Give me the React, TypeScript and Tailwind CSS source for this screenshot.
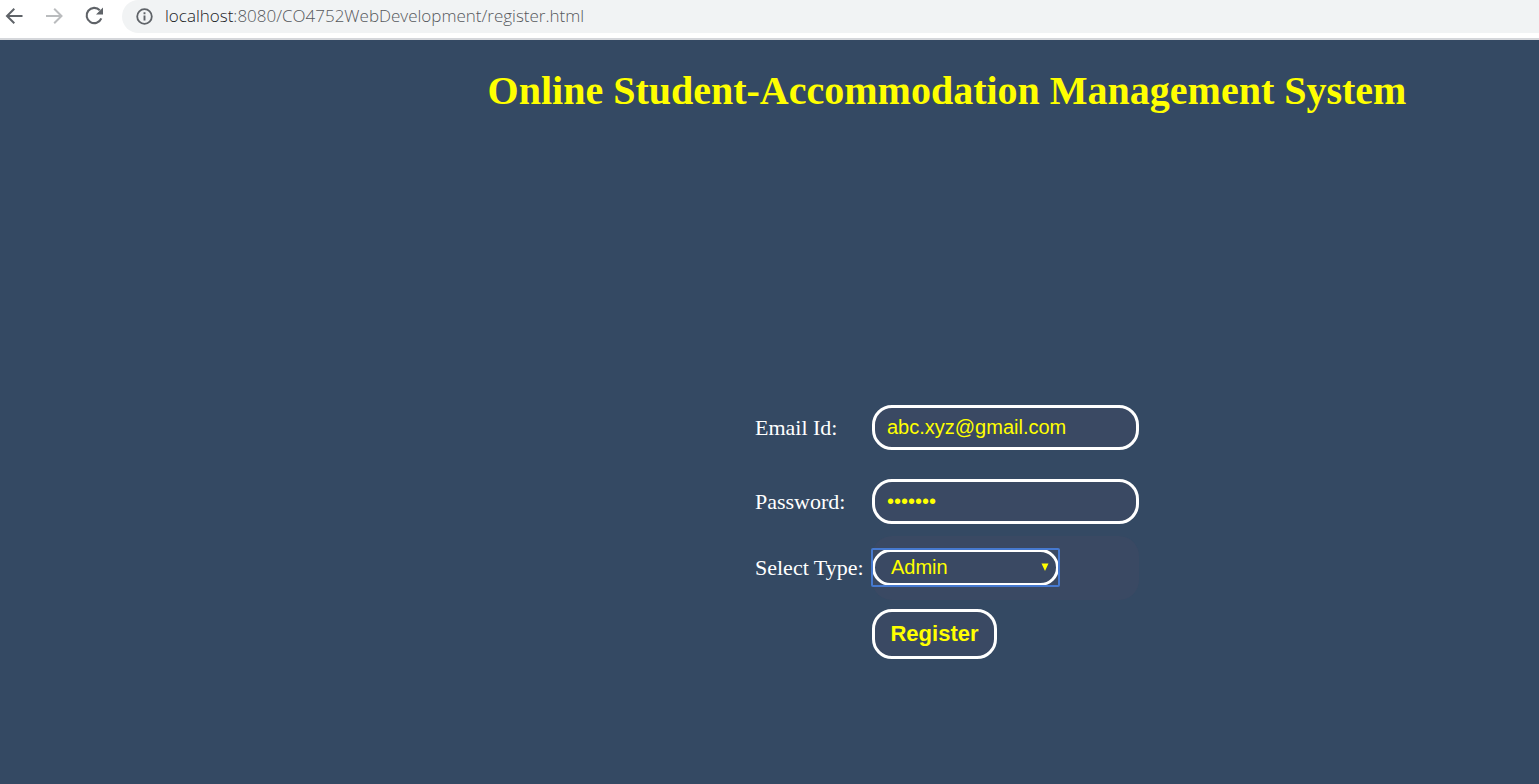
import { useState } from "react";

function Toolbar() {
  return (
    <header className="flex h-10 items-start border-b-2 border-[#d5d7db] bg-white text-[#5f6368]">
      <nav aria-label="Browser" className="flex h-8 shrink-0 items-center gap-4 px-0.5 pr-4">
        <button type="button" aria-label="Back" className="flex size-6 items-center justify-center">
          <svg className="size-5 shrink-0" viewBox="0 0 20 20" fill="none" stroke="currentColor" strokeWidth="2">
            <path d="M18.500 10H3.500M10.300 2.800 3 10l7.300 7.200" />
          </svg>
        </button>
        <button type="button" aria-label="Forward" className="flex size-6 items-center justify-center text-[#babcbe]">
          <svg className="size-5 shrink-0" viewBox="0 0 20 20" fill="none" stroke="currentColor" strokeWidth="2">
            <path d="M2 10h15M10.200 2.800 17.500 10l-7.300 7.200" />
          </svg>
        </button>
        <button type="button" aria-label="Reload" className="flex size-6 items-center justify-center">
          <svg className="size-6 shrink-0" viewBox="0 0 24 24" fill="none">
            <path d="M17.800 6.300A7.600 7.600 0 1 0 19.300 14.300" stroke="currentColor" strokeWidth="2.100" />
            <path d="M21 3.500v7h-7z" fill="currentColor" />
          </svg>
        </button>
      </nav>
      <div className="flex h-[33px] flex-1 items-center gap-3 rounded-l-full bg-[#f1f3f4] pl-3.5">
        <svg className="size-[17px] shrink-0" viewBox="0 0 17 17" fill="none" aria-hidden="true">
          <circle cx="8.500" cy="8.500" r="7.300" stroke="currentColor" strokeWidth="1.800" />
          <path d="M8.500 7.500v5M8.500 4.300v2" stroke="currentColor" strokeWidth="1.900" />
        </svg>
        <p className="pb-0.5 font-['Open_Sans','Noto_Sans',sans-serif] text-[17px] leading-6 font-light whitespace-nowrap text-[#55585c]">
          <span className="text-[#202124]">localhost</span>:8080/CO4752WebDevelopment/register.html
        </p>
      </div>
    </header>
  );
}

export default function App() {
  const [email, setEmail] = useState("abc.xyz@gmail.com");
  const [password, setPassword] = useState("student");
  const [type, setType] = useState("Admin");
  const field =
    "h-[45px] w-full rounded-[20px] border-3 border-white bg-[#3a4963] px-3 font-['Liberation_Sans',Arial,sans-serif] text-xl text-[#ffff00] outline-none";

  return (
    <div className="flex min-h-screen flex-col bg-[#344963] font-['Liberation_Serif','Times_New_Roman',serif]">
      <Toolbar />
      <main className="flex flex-col items-center pt-7 pb-12 pl-[355px]">
        <h1 className="text-[40px] leading-[46px] font-bold whitespace-nowrap text-[#ffff00]">
          Online Student-Accommodation Management System
        </h1>
        <form
          className="mt-[291px] grid grid-cols-[117px_267px] items-center text-[22px] leading-7 text-white"
          onSubmit={(e) => e.preventDefault()}
        >
          <label htmlFor="email">Email Id:</label>
          <input id="email" type="email" value={email} onChange={(e) => setEmail(e.target.value)} className={field} />
          <label htmlFor="password" className="mt-[29px]">Password:</label>
          <div className="mt-[29px]">
            <input
              id="password"
              type="password"
              value={password}
              onChange={(e) => setPassword(e.target.value)}
              className={field}
            />
          </div>
          <label htmlFor="type" className="mt-3 whitespace-nowrap">Select Type:</label>
          <div className="mt-3 flex h-16 items-center rounded-[20px] bg-[#3a4963] pb-0.5">
            <div className="relative flex">
              <select
                id="type"
                value={type}
                onChange={(e) => setType(e.target.value)}
                className="h-[37px] w-[187px] appearance-none rounded-[20px] border-3 border-white bg-[#3a4963] pr-6 pl-4 font-['Liberation_Sans',Arial,sans-serif] text-xl leading-6 text-[#ffff00] outline-none"
              >
                <option>Admin</option>
                <option>Student</option>
              </select>
              <span aria-hidden="true" className="pointer-events-none absolute -inset-px rounded-xs border-2 border-[#4679cf]" />
              <svg aria-hidden="true" className="pointer-events-none absolute top-3.5 right-2.5 h-2 w-2" viewBox="0 0 8 8">
                <path d="M0.500 0.500h7L4 8z" fill="#ffff00" />
              </svg>
            </div>
          </div>
          <button
            type="submit"
            className="col-start-2 mt-[9px] h-[50px] w-[125px] rounded-[20px] border-3 border-white bg-[#3a4963] font-['Liberation_Sans',Arial,sans-serif] text-[22px] font-bold text-[#ffff00]"
          >
            Register
          </button>
        </form>
      </main>
    </div>
  );
}
